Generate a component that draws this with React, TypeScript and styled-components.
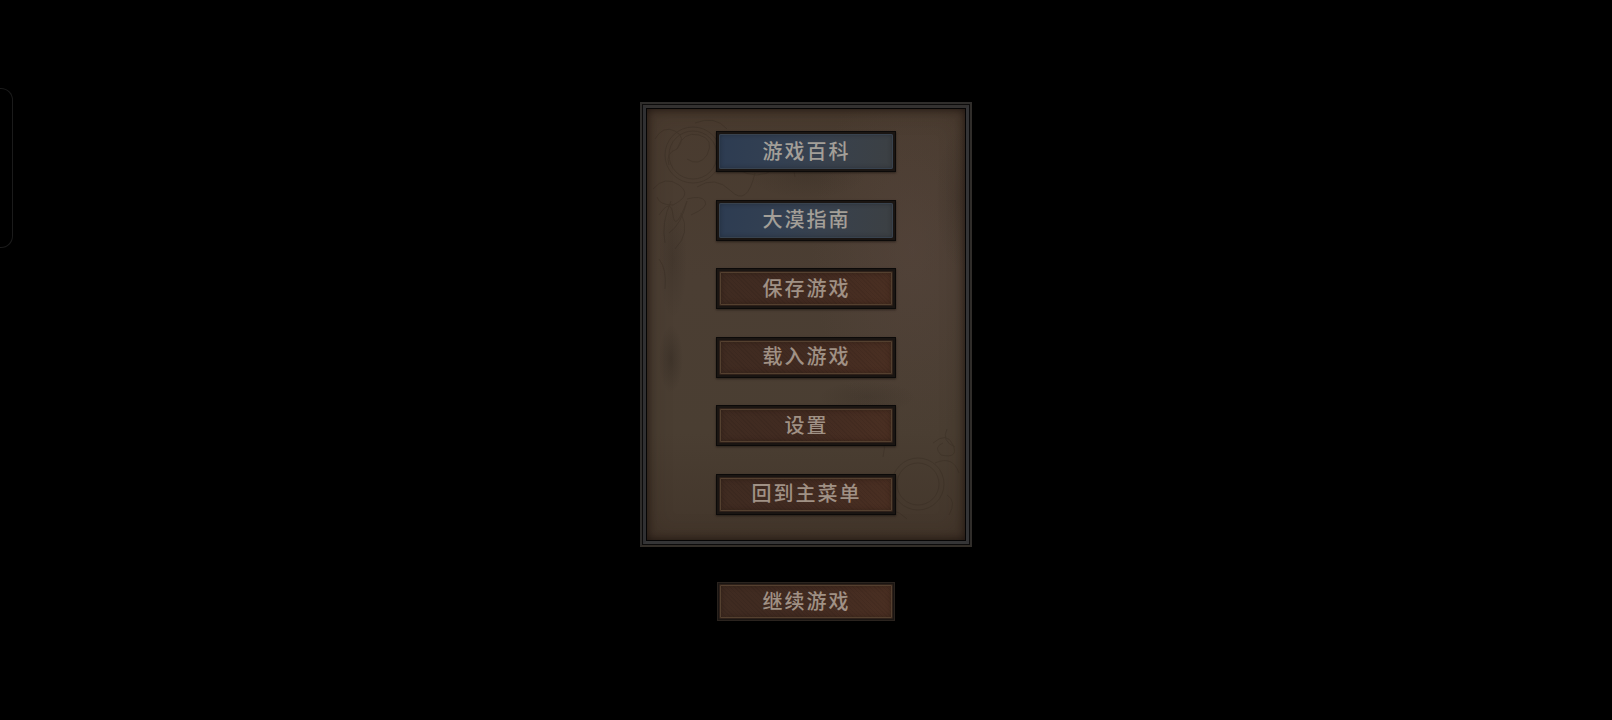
import React from 'react';
import styled, { createGlobalStyle, css } from 'styled-components';

const GlobalStyle = createGlobalStyle`
  *, *::before, *::after { box-sizing: border-box; }
  html, body { margin: 0; background: #000; }
`;

const Screen = styled.main`
  position: relative;
  display: flex;
  flex-direction: column;
  align-items: center;
  justify-content: center;
  gap: 35px;
  min-height: 100vh;
  padding: 3px 0 0;
  background: #000;
  font-family: 'Noto Sans CJK SC', 'Noto Sans', sans-serif;
`;

const Drawer = styled.aside`
  position: absolute;
  left: 0;
  top: 88px;
  width: 13px;
  height: 160px;
  border: 1px solid #1b1b1b;
  border-left: 0;
  border-radius: 0 12px 12px 0;
`;

const Frame = styled.section`
  width: 332px;
  max-width: 100%;
  padding: 1px;
  background: #0c0b0b;
  border: 2px solid;
  border-color: #2f2d2b #302d2a #332e28 #2e2c2a;
`;

const Bevel = styled.div`
  padding: 1px;
  border: 3px solid;
  border-color: #333130 #343436 #353536 #303032;
  background: #060505;
`;

const Parchment = styled.div`
  position: relative;
  padding: 22px 0 25px;
  background:
    radial-gradient(ellipse 12px 34px at 24px 250px, rgba(25, 20, 16, 0.24), transparent),
    radial-gradient(ellipse 14px 60px at 26px 150px, rgba(28, 22, 18, 0.16), transparent),
    radial-gradient(ellipse 60px 24px at 160px 66px, rgba(25, 20, 16, 0.12), transparent),
    radial-gradient(ellipse 50px 16px at 220px 288px, rgba(25, 20, 16, 0.12), transparent),
    radial-gradient(ellipse 24px 70px at 312px 90px, rgba(25, 20, 16, 0.12), transparent),
    radial-gradient(ellipse 100px 190px at 265px 140px, rgba(90, 72, 64, 0.42), transparent),
    linear-gradient(180deg, #493b2f 0%, #4b3e33 40%, #4a3e32 75%, #43362b 100%);
`;

const Shade = styled.div`
  position: absolute;
  inset: 0;
  box-shadow: inset 0 0 8px rgba(24, 14, 10, 0.85), inset 0 0 24px rgba(35, 24, 18, 0.3);
`;

const Etching = styled.svg`
  position: absolute;
  inset: 0;
  width: 100%;
  height: 100%;
  fill: none;
  stroke: #2b2118;
  stroke-width: 1;
  opacity: 0.24;
`;

const Menu = styled.nav`
  position: relative;
  display: flex;
  flex-direction: column;
  align-items: center;
  justify-content: space-between;
  min-height: 384px;
`;

type Tone = 'blue' | 'rust';

const tones = {
  blue: css`
    color: #a39f98;
    background: linear-gradient(100deg, #2d3c52 0%, #334052 35%, #38414d 60%, #3c4043 100%);
    box-shadow: inset 0 0 0 1px #38424e, inset 0 0 4px 1px rgba(20, 25, 32, 0.4);
  `,
  rust: css`
    color: #a09185;
    background:
      repeating-linear-gradient(45deg, rgba(0, 0, 0, 0.06) 0 1px, transparent 1px 3px),
      linear-gradient(100deg, #3f2b21 0%, #422b21 50%, #4a2f22 100%);
    box-shadow: inset 0 0 0 1px #2e2019, inset 0 0 0 2px #54402f, inset 0 0 5px 2px rgba(24, 14, 10, 0.35);
  `,
};

const Plate = styled.span<{ $tone: Tone }>`
  flex: 1;
  display: flex;
  align-items: center;
  justify-content: center;
  padding: 0 0 2px 1px;
  border-radius: 2px;
  ${(p) => tones[p.$tone]}
`;

const MenuButton = styled.button<{ $loose?: boolean }>`
  display: flex;
  width: ${(p) => (p.$loose ? '178px' : '180px')};
  height: ${(p) => (p.$loose ? '39px' : '41px')};
  padding: ${(p) => (p.$loose ? '1px' : '2px')};
  border: 1px solid ${(p) => (p.$loose ? '#2a231e' : '#0c0a09')};
  background: #1a1512;
  box-shadow: ${(p) => (p.$loose ? 'none' : '0 1px 2px rgba(10, 6, 4, 0.5)')};
  font: inherit;
  font-size: 20px;
  font-weight: 500;
  line-height: 28px;
  letter-spacing: 2px;
  cursor: pointer;

  &:focus-visible { outline: 1px solid #a09078; }
`;

const items: { label: string; tone: Tone }[] = [
  { label: '游戏百科', tone: 'blue' },
  { label: '大漠指南', tone: 'blue' },
  { label: '保存游戏', tone: 'rust' },
  { label: '载入游戏', tone: 'rust' },
  { label: '设置', tone: 'rust' },
  { label: '回到主菜单', tone: 'rust' },
];

export default function App() {
  return (
    <>
      <GlobalStyle />
      <Screen>
        <Drawer />
        <Frame>
          <Bevel>
            <Parchment>
              <Etching aria-hidden="true">
                <circle cx="46" cy="46" r="24" />
                <circle cx="46" cy="46" r="28" />
                <path d="M8 30q8-14 20-8t2 18q-12 4-8 16M30 40q6-18 22-14t8 20q-8 12-20 4M48 14q20-8 32 6M50 78q18-12 34 4t24-18M6 80q12-14 26-4t-6 20q-14 0-16-8M90 60q20 12 38 0t20 8M12 106q12-18 14 0t14-14q-6 24-18 32M24 92q-10 22-6 42M40 90q14-4 18 2t-14 14M34 104q10 20-6 36M12 150q8 10 6 30" />
                <circle cx="271" cy="375" r="21" />
                <circle cx="271" cy="375" r="26" />
                <path d="M286 334q14-12 20 2t-12 10q-8-8 2-12M224 322q18 6 12 26M288 354q18-8 24 10M232 404q14-8 28 6M300 386q10 6 2 20M300 320q-6 12 8 18" />
              </Etching>
              <Shade />
              <Menu aria-label="游戏菜单">
                {items.map(({ label, tone }) => (
                  <MenuButton key={label} type="button">
                    <Plate $tone={tone}>{label}</Plate>
                  </MenuButton>
                ))}
              </Menu>
            </Parchment>
          </Bevel>
        </Frame>
        <MenuButton type="button" $loose>
          <Plate $tone="rust">继续游戏</Plate>
        </MenuButton>
      </Screen>
    </>
  );
}
